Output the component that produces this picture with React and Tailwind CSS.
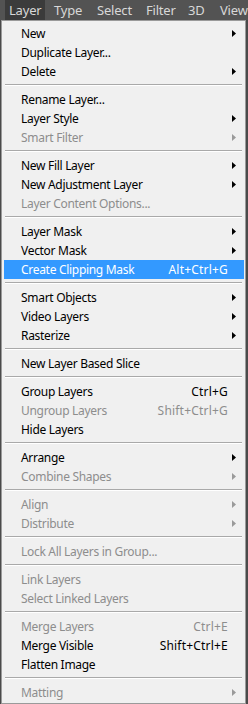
import React from "react"

const groups = [
    [
        { label: "New", sub: true },
        { label: "Duplicate Layer..." },
        { label: "Delete", sub: true },
    ],
    [
        { label: "Rename Layer..." },
        { label: "Layer Style", sub: true },
        { label: "Smart Filter", sub: true, off: true },
    ],
    [
        { label: "New Fill Layer", sub: true },
        { label: "New Adjustment Layer", sub: true },
        { label: "Layer Content Options...", off: true },
    ],
    [
        { label: "Layer Mask", sub: true },
        { label: "Vector Mask", sub: true },
        { label: "Create Clipping Mask", key: "Alt+Ctrl+G", active: true },
    ],
    [
        { label: "Smart Objects", sub: true },
        { label: "Video Layers", sub: true },
        { label: "Rasterize", sub: true },
    ],
    [{ label: "New Layer Based Slice" }],
    [
        { label: "Group Layers", key: "Ctrl+G" },
        { label: "Ungroup Layers", key: "Shift+Ctrl+G", off: true },
        { label: "Hide Layers" },
    ],
    [
        { label: "Arrange", sub: true },
        { label: "Combine Shapes", sub: true, off: true },
    ],
    [
        { label: "Align", sub: true, off: true },
        { label: "Distribute", sub: true, off: true },
    ],
    [{ label: "Lock All Layers in Group...", off: true }],
    [
        { label: "Link Layers", off: true },
        { label: "Select Linked Layers", off: true },
    ],
    [
        { label: "Merge Layers", key: "Ctrl+E", off: true },
        { label: "Merge Visible", key: "Shift+Ctrl+E" },
        { label: "Flatten Image" },
    ],
    [{ label: "Matting", sub: true, off: true }],
]

const tabs = [
    { name: "Layer", w: "w-[40px]", pl: "pl-[4px]" },
    { name: "Type", w: "w-[48px]", pl: "pl-[9px]" },
    { name: "Select", w: "w-[49px]", pl: "pl-[4px]" },
    { name: "Filter", w: "w-[42px]", pl: "pl-[4px]" },
    { name: "3D", w: "w-[32px]", pl: "pl-[4px]" },
    { name: "View", w: "w-[30px]", pl: "pl-[4px]" },
]

function Arrow({ color }) {
    return (
        <svg width="4" height="7" viewBox="0 0 4 7" className="absolute right-[8px] top-[6px]">
            <path d="M0 0 L4 3.5 L0 7 Z" fill={color} />
        </svg>
    )
}

function Item({ item }) {
    let color = "text-black"
    if (item.off) color = "text-[#8d8d8d]"
    if (item.active) color = "text-white"

    return (
        <div className={`relative h-[19px] mx-[2px] mr-[1px] flex items-center ${item.active ? "bg-[#3399ff]" : ""}`}>
            <span className={`pl-[17px] ${color}`}>{item.label}</span>
            {item.key && (
                <span className={`ml-auto pr-[16px] tracking-[0.2px] ${color}`}>{item.key}</span>
            )}
            {item.sub && <Arrow color={item.off ? "#9a9a9a" : "#000"} />}
        </div>
    )
}

export default function App() {
    return (
        <div className="w-[248px] h-[704px] overflow-hidden bg-[#4a4a4a] flex flex-col" style={{ fontFamily: '"Noto Sans", "Open Sans", sans-serif' }}>

            <div className="h-[20px] flex items-stretch bg-[#535353] text-[13px] text-[#d8d8d8] leading-[20px] tracking-[-0.2px]">
                <div className="w-[5px]" />
                {tabs.map((t) => (
                    <div key={t.name} className={`${t.w} ${t.pl} shrink-0 ${t.name === "Layer" ? "bg-[#3b3b3b]" : ""}`}>
                        {t.name}
                    </div>
                ))}
            </div>

            <div className="ml-[1px] w-[245px] flex-1 border border-[#9a9a9a] bg-[#f0f0f0] pt-[3px] text-[12px] leading-[19px] tracking-[-0.3px]">
                {groups.map((g, i) => (
                    <div key={i}>
                        {i > 0 && (
                            <div className="h-[9px] pt-[3px] px-[3px]">
                                <div className="border-t border-[#a9a9a9] border-b border-b-white" />
                            </div>
                        )}
                        {g.map((item) => (
                            <Item key={item.label} item={item} />
                        ))}
                    </div>
                ))}
            </div>

        </div>
    )
}
